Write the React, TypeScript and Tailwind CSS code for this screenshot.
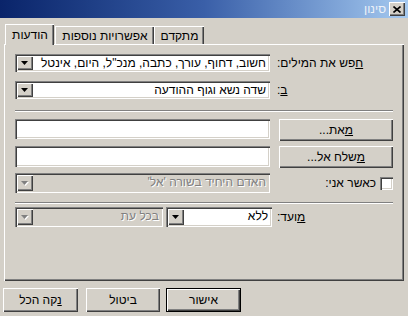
import React from "react";

const sunken =
  "shadow-[inset_1px_1px_0_#808080,inset_2px_2px_0_#404040,inset_-1px_-1px_0_#ffffff,inset_-2px_-2px_0_#d4d0c8]";
const raised =
  "shadow-[inset_1px_1px_0_#ffffff,inset_-1px_-1px_0_#404040,inset_-2px_-2px_0_#808080]";

function Arrow({ disabled }: { disabled?: boolean }) {
  return (
    <svg width="8" height="5" viewBox="0 0 8 5">
      {disabled && <path d="M1 1h7L4.5 5z" fill="#ffffff" />}
      <path d="M0 0h7L3.5 4z" fill={disabled ? "#808080" : "#000000"} />
    </svg>
  );
}

function Combo({
  className,
  text,
  disabled,
}: {
  className: string;
  text: string;
  disabled?: boolean;
}) {
  return (
    <div
      className={`flex p-[2px] ${sunken} ${disabled ? "bg-[#d4d0c8]" : "bg-white"} ${className}`}
    >
      <div
        className={`flex w-[16px] shrink-0 items-center justify-center bg-[#d4d0c8] ${raised}`}
      >
        <Arrow disabled={disabled} />
      </div>
      <div
        dir="rtl"
        className={`flex-1 overflow-hidden whitespace-nowrap pr-[2px] text-right leading-[14px] ${
          disabled ? "text-[#808080] [text-shadow:1px_1px_0_#ffffff]" : "text-black"
        }`}
      >
        {text}
      </div>
    </div>
  );
}

function Button({
  className,
  children,
  isDefault,
}: {
  className: string;
  children: React.ReactNode;
  isDefault?: boolean;
}) {
  if (isDefault) {
    return (
      <div className={`border border-black ${className}`}>
        <div
          dir="rtl"
          className={`flex h-full w-full items-center justify-center bg-[#d4d0c8] ${raised}`}
        >
          {children}
        </div>
      </div>
    );
  }
  return (
    <div
      dir="rtl"
      className={`flex items-center justify-center bg-[#d4d0c8] ${raised} ${className}`}
    >
      {children}
    </div>
  );
}

function Separator() {
  return (
    <div className="w-[378px]">
      <div className="h-px bg-[#808080]" />
      <div className="h-px bg-white" />
    </div>
  );
}

export default function App() {
  return (
    <div className="flex h-[316px] w-[408px] flex-col overflow-hidden bg-[#d4d0c8] font-['Liberation_Sans',Arial,sans-serif] text-[12px] text-black">
      {/* title bar */}
      <div className="flex h-[18px] items-center justify-end bg-linear-to-r from-[#0a246a] via-[#3a5fa8] to-[#a6caf0] pr-[3px]">
        <span dir="rtl" className="mr-[3px] text-[12px] text-[#eef2f8]">
          סינון
        </span>
        <div
          className={`flex h-[14px] w-[16px] items-center justify-center bg-[#d4d0c8] ${raised}`}
        >
          <svg width="8" height="7" viewBox="0 0 8 7">
            <path d="M0.5 0.5L7.5 6.5M7.5 0.5L0.5 6.5" stroke="#000" strokeWidth="1.6" />
          </svg>
        </div>
      </div>

      {/* tabs */}
      <div className="flex h-[26px] items-end pl-[5px]">
        <div className="relative z-10 -mb-px flex h-[21px] w-[49px] items-center justify-center border-t border-l border-white bg-[#d4d0c8] shadow-[inset_-1px_0_0_#404040,inset_-2px_0_0_#808080]">
          <span dir="rtl">הודעות</span>
        </div>
        <div className="ml-px flex h-[18px] w-[99px] items-center justify-center border-t border-l border-white shadow-[inset_-1px_0_0_#404040,inset_-2px_0_0_#808080]">
          <span dir="rtl">אפשרויות נוספות</span>
        </div>
        <div className="flex h-[18px] w-[50px] items-center justify-center border-t border-l border-white shadow-[inset_-1px_0_0_#404040,inset_-2px_0_0_#808080]">
          <span dir="rtl">מתקדם</span>
        </div>
      </div>

      {/* panel */}
      <div className="ml-[4px] h-[237px] w-[400px] pl-[11px] pt-[10px] shadow-[inset_1px_1px_0_#ffffff,inset_-1px_-1px_0_#404040,inset_-2px_-2px_0_#808080]">
        <div className="flex h-[18px] items-center">
          <Combo className="h-[18px] w-[255px]" text='חשוב, דחוף, עורך, כתבה, מנכ"ל, היום, אינטל' />
          <span dir="rtl" className="ml-[7px]">
            <u>ח</u>פש את המילים:
          </span>
        </div>
        <div className="mt-[9px] flex h-[18px] items-center">
          <Combo className="h-[18px] w-[255px]" text="שדה נשא וגוף ההודעה" />
          <span dir="rtl" className="ml-[7px]">
            <u>ב</u>:
          </span>
        </div>

        <div className="mt-[11px]">
          <Separator />
        </div>

        <div className="mt-[7px] flex h-[22px] items-start">
          <div className={`h-[20px] w-[255px] bg-white ${sunken}`} />
          <Button className="ml-[9px] h-[22px] w-[114px]">
            <span>
              <u>מ</u>את...
            </span>
          </Button>
        </div>
        <div className="mt-[5px] flex h-[22px] items-start">
          <div className={`h-[21px] w-[255px] bg-white ${sunken}`} />
          <Button className="ml-[9px] h-[22px] w-[114px]">
            <span>
              <u>מ</u>שלח אל...
            </span>
          </Button>
        </div>
        <div className="mt-[5px] flex h-[20px] w-[378px] items-center">
          <Combo className="h-[20px] w-[255px]" text="האדם היחיד בשורה 'אל'" disabled />
          <div className="flex flex-1 items-center justify-end gap-[4px]">
            <span dir="rtl">כאשר אני:</span>
            <div className={`h-[13px] w-[13px] bg-white ${sunken}`} />
          </div>
        </div>

        <div className="mt-[9px]">
          <Separator />
        </div>

        <div className="mt-[3px] flex h-[20px] items-center">
          <Combo className="h-[20px] w-[148px]" text="בכל עת" disabled />
          <Combo className="ml-[3px] h-[20px] w-[106px]" text="ללא" />
          <span dir="rtl" className="ml-[5px]">
            <u>מ</u>ועד:
          </span>
        </div>
      </div>

      {/* buttons */}
      <div className="ml-[3px] mt-[7px] flex h-[24px] items-start">
        <Button className="h-[24px] w-[75px]">
          <span>
            <u>נ</u>קה הכל
          </span>
        </Button>
        <Button className="ml-[8px] h-[24px] w-[74px]">ביטול</Button>
        <Button className="ml-[6px] h-[24px] w-[75px]" isDefault>
          אישור
        </Button>
      </div>
    </div>
  );
}
